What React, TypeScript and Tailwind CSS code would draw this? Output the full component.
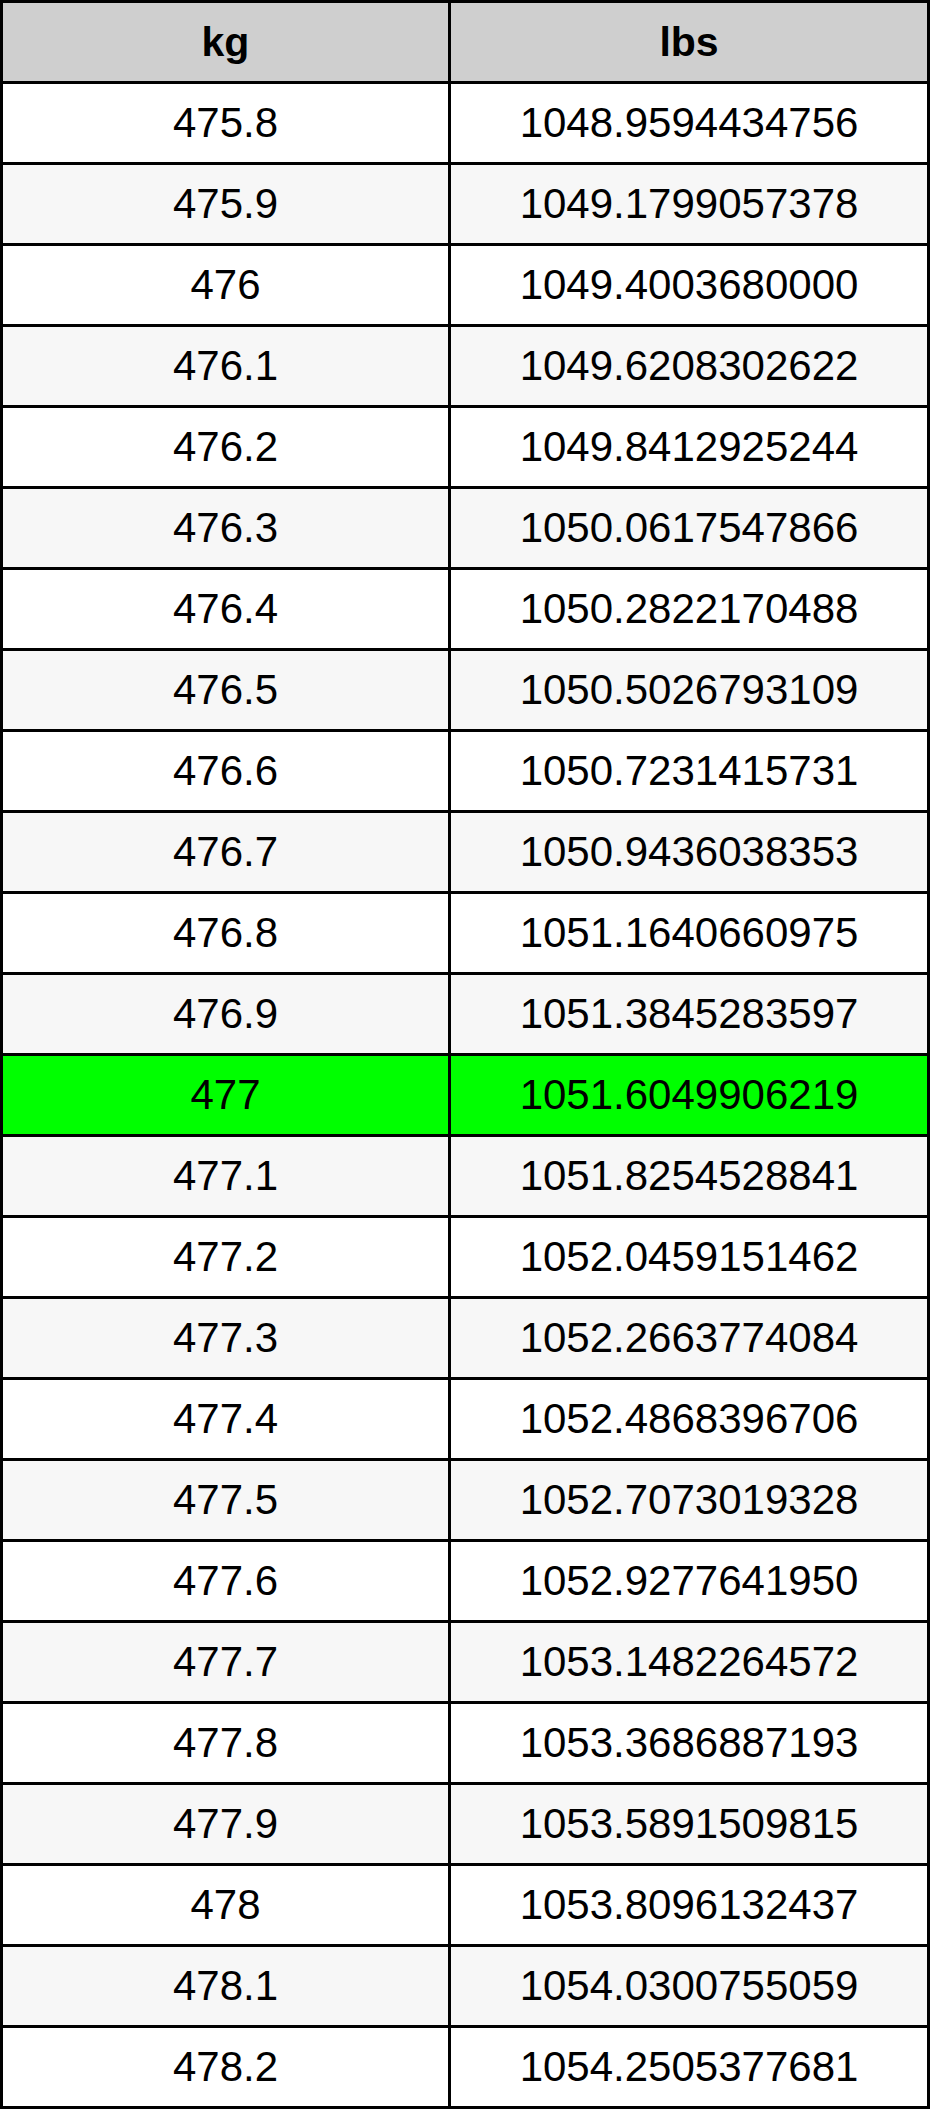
import React from "react";

const rows: [string, string][] = [
  ["475.8", "1048.9594434756"],
  ["475.9", "1049.1799057378"],
  ["476", "1049.4003680000"],
  ["476.1", "1049.6208302622"],
  ["476.2", "1049.8412925244"],
  ["476.3", "1050.0617547866"],
  ["476.4", "1050.2822170488"],
  ["476.5", "1050.5026793109"],
  ["476.6", "1050.7231415731"],
  ["476.7", "1050.9436038353"],
  ["476.8", "1051.1640660975"],
  ["476.9", "1051.3845283597"],
  ["477", "1051.6049906219"],
  ["477.1", "1051.8254528841"],
  ["477.2", "1052.0459151462"],
  ["477.3", "1052.2663774084"],
  ["477.4", "1052.4868396706"],
  ["477.5", "1052.7073019328"],
  ["477.6", "1052.9277641950"],
  ["477.7", "1053.1482264572"],
  ["477.8", "1053.3686887193"],
  ["477.9", "1053.5891509815"],
  ["478", "1053.8096132437"],
  ["478.1", "1054.0300755059"],
  ["478.2", "1054.2505377681"],
];

export default function App() {
  return (
    <div className="w-[930px] bg-white" style={{ fontFamily: '"Liberation Sans", Arial, sans-serif' }}>
      <div className="grid grid-cols-[445px_476px] auto-rows-[78px] gap-[3px] p-[3px] bg-black text-black">
        <div className="bg-[#cfcfcf] flex items-center justify-center font-bold text-[41px] leading-none">kg</div>
        <div className="bg-[#cfcfcf] flex items-center justify-center font-bold text-[41px] leading-none">lbs</div>
        {rows.map(([kg, lbs], i) => {
          const bg = kg === "477" ? "bg-[#00ff00]" : i % 2 === 1 ? "bg-[#f7f7f7]" : "bg-white";
          return (
            <React.Fragment key={kg}>
              <div className={`${bg} flex items-center justify-center text-[42px] leading-none`}>{kg}</div>
              <div className={`${bg} flex items-center justify-center text-[42px] leading-none`}>{lbs}</div>
            </React.Fragment>
          );
        })}
      </div>
    </div>
  );
}
